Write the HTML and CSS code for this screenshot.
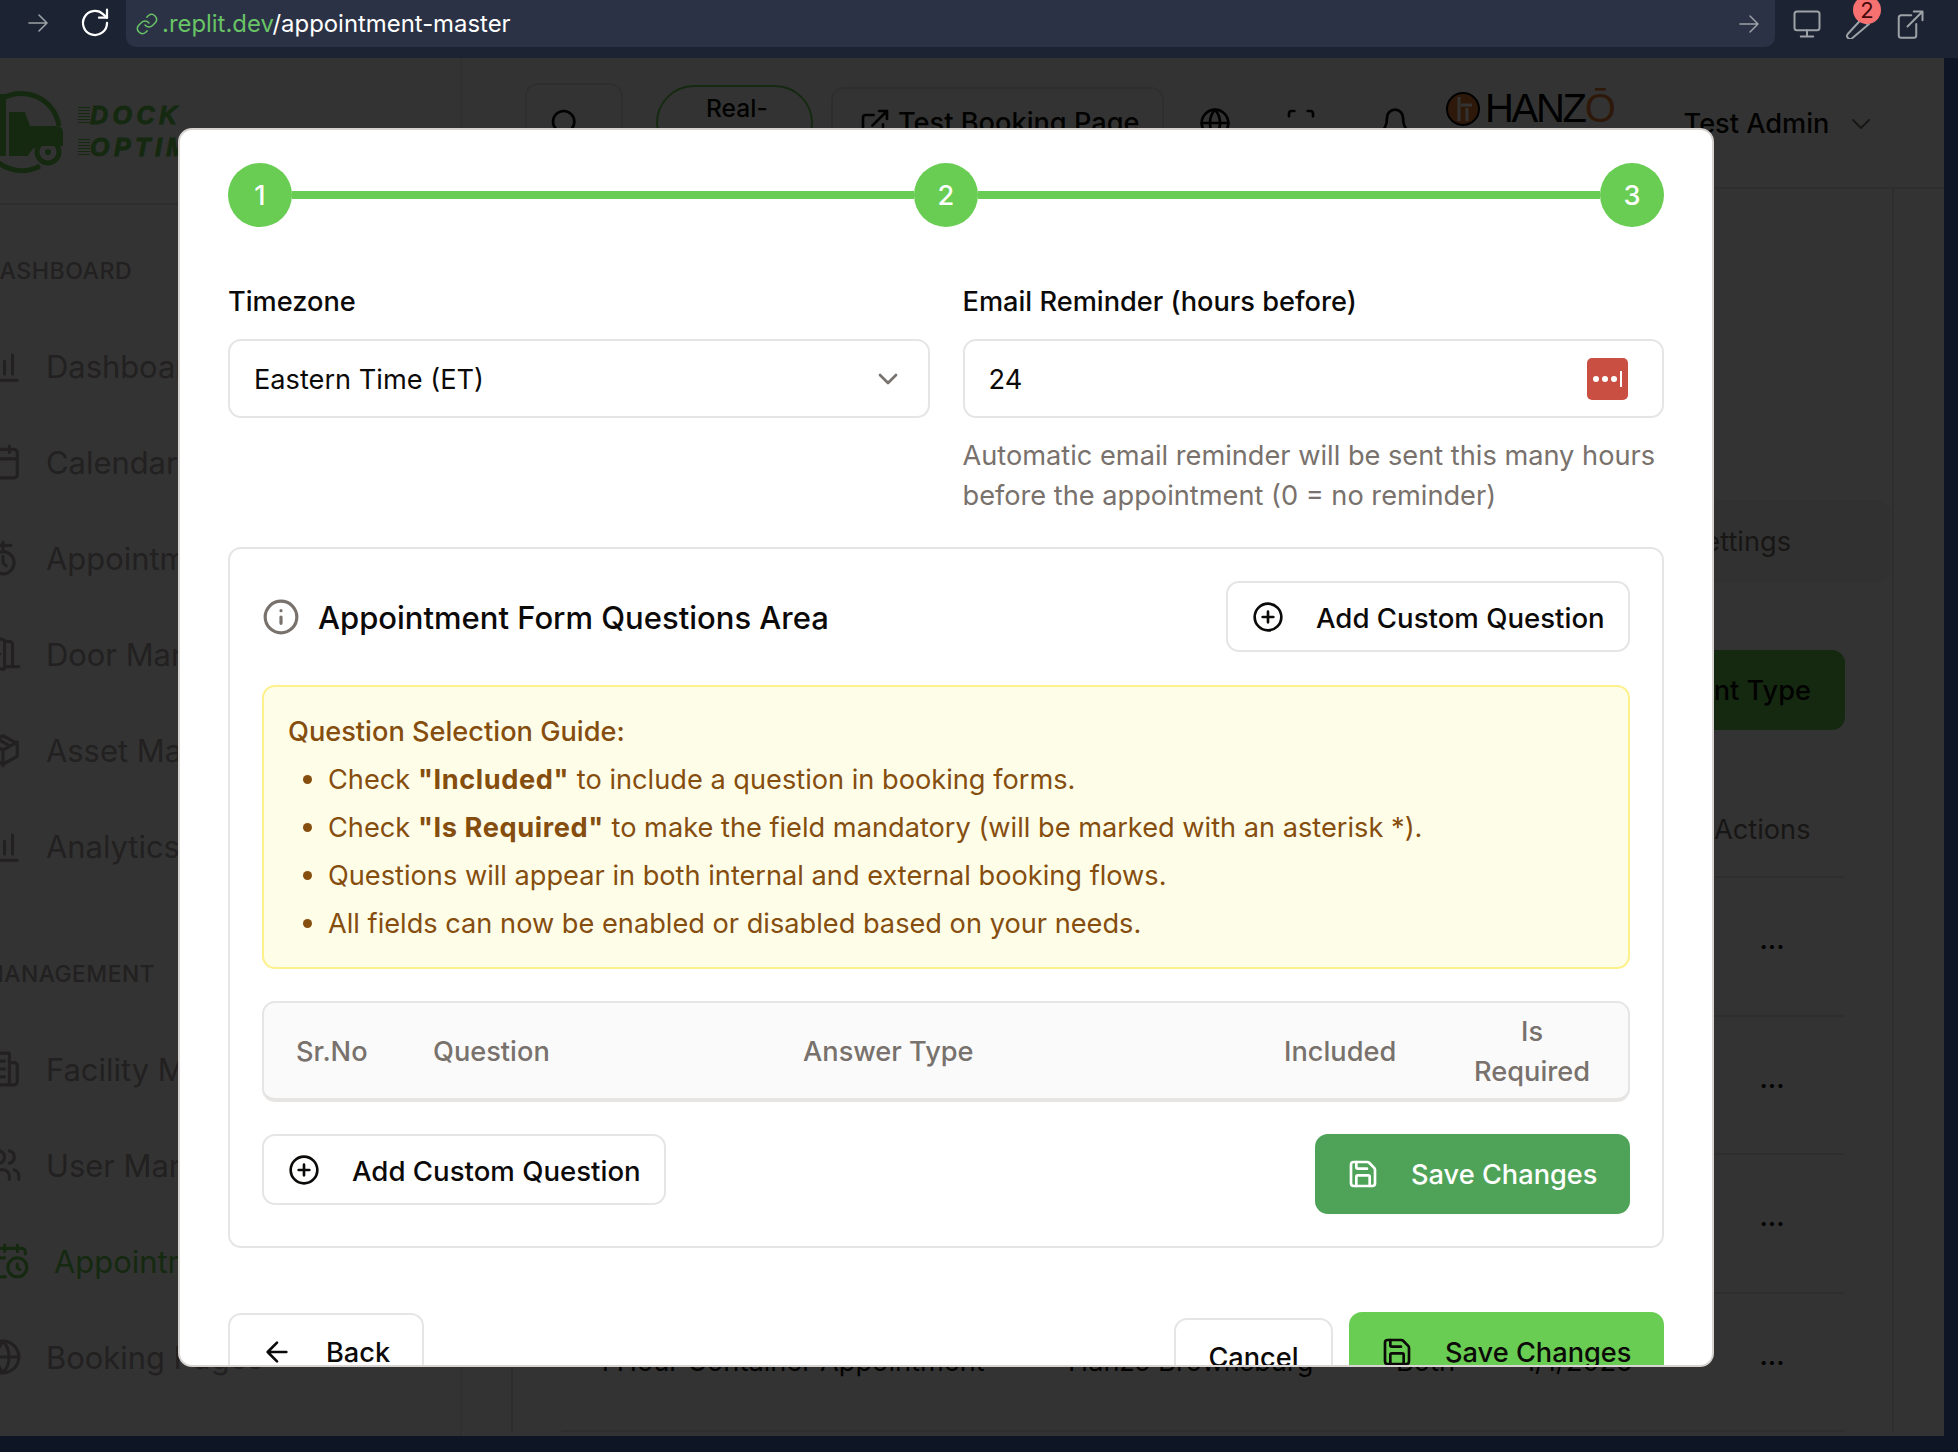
FILE: index.html
```html
<!DOCTYPE html>
<html>
<head>
	<title>Appointment Master</title>
	<link rel="stylesheet" href="styles.css">
</head>
<body>
	<div class="browser-bar">
		<svg class="bar-icon nav-arrow" viewBox="0 0 24 24"><path d="M3 12h18M13 4l8 8-8 8"/></svg>
		<svg class="reload-icon" viewBox="0 0 24 24"><path d="M21 12a9 9 0 1 1-3-6.7L21 8"/><path d="M21 2v6h-6"/></svg>
		<div class="url-bar">
			<svg class="link-icon" viewBox="0 0 24 24"><path d="M10 13a5 5 0 0 0 7.5.5l3-3a5 5 0 0 0-7-7l-1.7 1.7"/><path d="M14 11a5 5 0 0 0-7.5-.5l-3 3a5 5 0 0 0 7 7l1.7-1.7"/></svg>
			<span class="url-text"><span class="url-host">.replit.dev</span>/appointment-master</span>
			<svg class="url-go" viewBox="0 0 24 24"><path d="M3 12h18M13 4l8 8-8 8"/></svg>
		</div>
		<svg class="bar-icon monitor" viewBox="0 0 24 24"><rect x="2" y="2" width="20" height="15" rx="2"/><path d="M12 17v5M7 22h10"/></svg>
		<div class="tool-wrap">
			<svg class="bar-icon" viewBox="0 0 24 24"><path d="M15 7a5 5 0 0 0 5 5L7 23a2.2 2.2 0 0 1-4-3L15 7z"/></svg>
			<span class="tool-badge">2</span>
		</div>
		<svg class="bar-icon external" viewBox="0 0 24 24"><path d="M13 5H5a2 2 0 0 0-2 2v14a2 2 0 0 0 2 2h10a2 2 0 0 0 2-2v-9"/><path d="M10 14L22 2M15 2h7v7"/></svg>
	</div>

	<div class="app">
		<aside class="sidebar">
			<div class="logo">
				<svg class="logo-mark" viewBox="0 0 66 84">
					<path class="logo-ring" d="M0 10a38 38 0 0 1 59 26M40 76a38 38 0 0 1-52-16"/>
					<path class="logo-truck" d="M-4 4h10v62H-4zM9 22h16l5 14h27a6 6 0 0 1 6 6v14H42a16 16 0 0 0-14 10H9z"/>
					<circle class="logo-wheel" cx="48" cy="62" r="11"/>
					<circle class="logo-hub" cx="48" cy="62" r="2"/>
				</svg>
				<div class="logo-text"><span class="logo-line">DOCK</span><span class="logo-line">OPTIMA</span></div>
			</div>
			<div class="side-label">DASHBOARD</div>
			<a class="side-item"><svg viewBox="0 0 24 24"><path d="M3 3v16a2 2 0 0 0 2 2h16M13 17V9M18 17V5M8 17v-3"/></svg>Dashboard</a>
			<a class="side-item"><svg viewBox="0 0 24 24"><rect x="3" y="4" width="18" height="18" rx="2"/><path d="M16 2v4M8 2v4M3 10h18"/></svg>Calendar</a>
			<a class="side-item"><svg viewBox="0 0 24 24"><circle cx="12" cy="15" r="7"/><path d="M12 11v4l2 2M12 2v4M7 4h10"/></svg>Appointments</a>
			<a class="side-item"><svg viewBox="0 0 24 24"><path d="M13 4h3a2 2 0 0 1 2 2v14M2 20h3M13 20h9M10 12v.01M13 4.6v16.1a1 1 0 0 1-1.2 1L5 20V5.6a2 2 0 0 1 1.5-2l4-1A2 2 0 0 1 13 4.6z"/></svg>Door Manager</a>
			<a class="side-item"><svg viewBox="0 0 24 24"><path d="M12 22V12M3 7l9 5 9-5M21 16V8l-9-5-9 5v8l9 5 9-5M7.5 4.5l9 5"/></svg>Asset Manager</a>
			<a class="side-item"><svg viewBox="0 0 24 24"><path d="M3 3v16a2 2 0 0 0 2 2h16M13 17V9M18 17V5M8 17v-3"/></svg>Analytics</a>
			<div class="side-label side-label-two">MANAGEMENT</div>
			<a class="side-item"><svg viewBox="0 0 24 24"><path d="M2 2h14v20H2zM16 8h3a2 2 0 0 1 2 2v10a2 2 0 0 1-2 2H2M5 7h8M5 12h8M5 17h8"/></svg>Facility Master</a>
			<a class="side-item"><svg viewBox="0 0 24 24"><path d="M16 21v-2a4 4 0 0 0-4-4H6a4 4 0 0 0-4 4v2M16 3.1a4 4 0 0 1 0 7.8M22 21v-2a4 4 0 0 0-3-3.9"/><circle cx="9" cy="7" r="4"/></svg>User Manager</a>
			<a class="side-item side-active"><svg viewBox="0 0 24 24"><path d="M21 7.5V6a2 2 0 0 0-2-2H5a2 2 0 0 0-2 2v14a2 2 0 0 0 2 2h3.5M16 2v4M8 2v4M3 10h5M17.5 17.5L16 16.3V14"/><circle cx="16" cy="16" r="6"/></svg>Appointment Master</a>
			<a class="side-item"><svg viewBox="0 0 24 24"><circle cx="12" cy="12" r="10"/><path d="M2 12h20M12 2a15 15 0 0 1 0 20M12 2a15 15 0 0 0 0 20"/></svg>Booking Pages</a>
		</aside>

		<main class="main">
			<header class="topbar">
				<div class="top-btn search-btn"><svg class="top-icon" viewBox="0 0 24 24"><circle cx="11" cy="11" r="8"/><path d="M21 21l-4.3-4.3"/></svg></div>
				<div class="realtime"><svg class="realtime-icon" viewBox="0 0 24 24"><circle cx="12" cy="12" r="10"/><path d="M8 12l3 3 5-5"/></svg><span>Real-<br>time</span></div>
				<div class="top-btn booking-btn"><svg class="top-icon" viewBox="0 0 24 24"><path d="M15 3h6v6M10 14L21 3M18 13v6a2 2 0 0 1-2 2H5a2 2 0 0 1-2-2V8a2 2 0 0 1 2-2h6"/></svg>Test Booking Page</div>
				<svg class="top-icon globe" viewBox="0 0 24 24"><circle cx="12" cy="12" r="10"/><path d="M2 12h20M12 2a15 15 0 0 1 0 20M12 2a15 15 0 0 0 0 20"/></svg>
				<svg class="top-icon focus" viewBox="0 0 24 24"><path d="M3 7V5a2 2 0 0 1 2-2h2M17 3h2a2 2 0 0 1 2 2v2M21 17v2a2 2 0 0 1-2 2h-2M7 21H5a2 2 0 0 1-2-2v-2"/></svg>
				<svg class="top-icon bell" viewBox="0 0 24 24"><path d="M6 8a6 6 0 0 1 12 0c0 7 3 9 3 9H3s3-2 3-9"/></svg>
				<div class="brand">
					<svg class="brand-mark" viewBox="0 0 34 34"><circle cx="17" cy="17" r="16" fill="#e07a30" stroke="#000" stroke-width="2"/><path d="M13 5v24M15 13h11M21 16v13" stroke="#fff" stroke-width="3" fill="none" stroke-linecap="butt"/></svg>
					<span class="brand-name">HANZ<span class="brand-o">Ō</span></span>
				</div>
				<div class="user">Test Admin<svg class="user-chevron" viewBox="0 0 24 24"><path d="M4 8l8 8 8-8"/></svg></div>
			</header>

			<section class="page-card">
				<div class="tabs"><span>Appointment Types</span><span class="tab-last">Settings</span></div>
				<div class="toolbar"><div class="new-type">New Appointment Type</div></div>
				<div class="row head-row"><span>Name</span><span>Facility</span><span>Type</span><span>Created</span><span>Actions</span></div>
				<div class="row"><span>4 Hour Trailer Appointment</span><span>Hanzo Brownsburg</span><span>Both</span><span>1/1/2025</span><span class="dots">•••</span></div>
				<div class="row"><span>2 Hour Trailer Appointment</span><span>Hanzo Brownsburg</span><span>Both</span><span>1/1/2025</span><span class="dots">•••</span></div>
				<div class="row"><span>4 Hour Container Appointment</span><span>Hanzo Brownsburg</span><span>Both</span><span>1/1/2025</span><span class="dots">•••</span></div>
				<div class="row"><span>1 Hour Container Appointment</span><span>Hanzo Brownsburg</span><span>Both</span><span>1/1/2025</span><span class="dots">•••</span></div>
			</section>
		</main>
		<div class="backdrop"></div>
	</div>

	<div class="modal">
		<div class="stepper">
			<span class="step">1</span><span class="step-line"></span>
			<span class="step">2</span><span class="step-line"></span>
			<span class="step">3</span>
		</div>

		<div class="field-grid">
			<div>
				<label class="field-label">Timezone</label>
				<div class="input-box">Eastern Time (ET)
					<svg class="select-chevron" viewBox="0 0 24 24"><path d="M6 9l6 6 6-6"/></svg>
				</div>
			</div>
			<div>
				<label class="field-label">Email Reminder (hours before)</label>
				<div class="input-box">24
					<span class="pw-badge"><i></i><i></i><i></i><b></b></span>
				</div>
				<p class="help">Automatic email reminder will be sent this many hours before the appointment (0 = no reminder)</p>
			</div>
		</div>

		<div class="card">
			<div class="card-head">
				<svg class="info-icon" viewBox="0 0 24 24"><circle cx="12" cy="12" r="10"/><path d="M12 16v-4M12 8h.01"/></svg>
				<h2 class="card-title">Appointment Form Questions Area</h2>
				<button class="btn btn-outline btn-add">
					<svg class="btn-icon" viewBox="0 0 24 24"><circle cx="12" cy="12" r="10"/><path d="M8 12h8M12 8v8"/></svg>
					<span class="add-label">Add Custom Question</span>
				</button>
			</div>

			<div class="guide">
				<div class="guide-title">Question Selection Guide:</div>
				<ul class="guide-list">
					<li>Check <strong>"Included"</strong> to include a question in booking forms.</li>
					<li>Check <strong>"Is Required"</strong> to make the field mandatory (will be marked with an asterisk *).</li>
					<li>Questions will appear in both internal and external booking flows.</li>
					<li>All fields can now be enabled or disabled based on your needs.</li>
				</ul>
			</div>

			<div class="q-table">
				<span class="q-cell">Sr.No</span>
				<span class="q-cell">Question</span>
				<span class="q-cell">Answer Type</span>
				<span class="q-cell">Included</span>
				<span class="q-cell q-center">Is Required</span>
			</div>

			<div class="card-actions">
				<button class="btn btn-outline btn-add">
					<svg class="btn-icon" viewBox="0 0 24 24"><circle cx="12" cy="12" r="10"/><path d="M8 12h8M12 8v8"/></svg>
					<span class="add-label">Add Custom Question</span>
				</button>
				<button class="btn btn-save btn-dim">
					<svg class="btn-icon" viewBox="0 0 24 24"><path d="M15.2 3a2 2 0 0 1 1.4.6l3.8 3.8a2 2 0 0 1 .6 1.4V19a2 2 0 0 1-2 2H5a2 2 0 0 1-2-2V5a2 2 0 0 1 2-2z"/><path d="M17 21v-7a1 1 0 0 0-1-1H8a1 1 0 0 0-1 1v7"/><path d="M7 3v4a1 1 0 0 0 1 1h7"/></svg>
					Save Changes
				</button>
			</div>
		</div>

		<div class="modal-foot">
			<button class="btn btn-outline btn-back">
				<svg class="btn-icon" viewBox="0 0 24 24"><path d="M12 19l-7-7 7-7M19 12H5"/></svg>
				Back
			</button>
			<div class="foot-right">
				<button class="btn btn-outline btn-cancel">Cancel</button>
				<button class="btn btn-save btn-bright">
					<svg class="btn-icon" viewBox="0 0 24 24"><path d="M15.2 3a2 2 0 0 1 1.4.6l3.8 3.8a2 2 0 0 1 .6 1.4V19a2 2 0 0 1-2 2H5a2 2 0 0 1-2-2V5a2 2 0 0 1 2-2z"/><path d="M17 21v-7a1 1 0 0 0-1-1H8a1 1 0 0 0-1 1v7"/><path d="M7 3v4a1 1 0 0 0 1 1h7"/></svg>
					Save Changes
				</button>
			</div>
		</div>
	</div>
</body>
</html>
```

FILE: styles.css
```css
* {
	box-sizing: border-box;
}

html, body {
	height: 100%;
}

body {
	margin: 0;
	position: relative;
	height: 1452px;
	overflow: hidden;
	background-color: #0e1525;
	font-family: Inter, "Noto Sans", sans-serif;
	font-size: 27.2px;
	color: #0c0a09;
}

svg {
	fill: none;
	stroke: currentColor;
	stroke-width: 2;
	stroke-linecap: round;
	stroke-linejoin: round;
	flex-shrink: 0;
}

/* browser chrome */
.browser-bar {
	display: flex;
	align-items: flex-start;
	height: 58px;
	background-color: #1c2333;
	color: #9da2a6;
}

.bar-icon {
	width: 30px;
	height: 30px;
	margin-top: 9px;
	stroke-width: 1.6;
}

.nav-arrow {
	width: 24px;
	margin-left: 26px;
	margin-top: 8px;
}

.reload-icon {
	width: 32px;
	height: 32px;
	margin: 7px 0 0 29px;
	color: #fff;
	stroke-width: 1.7;
}

.url-bar {
	display: flex;
	align-items: center;
	width: 1649px;
	height: 47px;
	margin-left: 15px;
	padding: 0 14px 0 9px;
	background-color: #2b3245;
	border-radius: 0 0 10px 10px;
	color: #fff;
}

.link-icon {
	width: 24px;
	height: 24px;
	color: #69c466;
	stroke-width: 1.5;
}

.url-text {
	flex: 1;
	margin-left: 3px;
	font-size: 23.9px;
}

.url-host {
	color: #69c466;
}

.url-go {
	width: 24px;
	height: 24px;
	color: #9da2a6;
	stroke-width: 1.5;
}

.monitor {
	margin-left: 17px;
}

.tool-wrap {
	position: relative;
	width: 30px;
	margin-left: 22px;
}

.tool-badge {
	position: absolute;
	left: 9px;
	top: -4px;
	width: 28px;
	height: 28px;
	border-radius: 50%;
	background-color: #f87171;
	color: #450a0a;
	font-size: 22px;
	line-height: 28px;
	text-align: center;
}

.external {
	margin-left: 21px;
}

/* dimmed app behind the dialog */
.app {
	position: relative;
	display: flex;
	width: 1944px;
	height: 1378px;
	overflow: hidden;
	background-color: #fff;
}

.backdrop {
	position: absolute;
	inset: 0;
	background-color: rgba(0, 0, 0, 0.8);
}

.sidebar {
	flex: none;
	width: 479px;
	margin-left: -17px;
	border-right: 2px solid #eeeeee;
	color: #a8a29e;
}

.logo {
	display: flex;
	height: 147px;
	padding: 32px 0 0 17px;
	border-bottom: 2px solid #e7e5e4;
}

.logo-mark {
	width: 66px;
	height: 84px;
	overflow: visible;
	color: #68cd52;
}

.logo-ring {
	stroke-width: 5;
	stroke-linecap: butt;
}

.logo-truck {
	fill: #68cd52;
	stroke: none;
}

.logo-wheel {
	stroke-width: 5;
}

.logo-hub {
	fill: #68cd52;
}

.logo-text {
	display: flex;
	flex-direction: column;
	gap: 7px;
	margin: 13px 0 0 12px;
	font-family: "Liberation Sans", sans-serif;
	font-style: italic;
	font-weight: bold;
	font-size: 25px;
	line-height: 25px;
	letter-spacing: 4.5px;
	color: #68cd52;
	-webkit-text-stroke: 1px #68cd52;
}

.logo-line {
	display: flex;
	align-items: center;
}

.logo-line::before {
	content: "";
	width: 12px;
	height: 18px;
	background: repeating-linear-gradient(#68cd52 0 1px, transparent 1px 3px);
}

.side-label {
	margin-top: 48px;
	line-height: 36px;
	font-size: 23.2px;
	font-weight: 500;
	letter-spacing: 0.5px;
}

.side-label-two {
	margin-top: 62px;
	font-size: 22.8px;
}

.side-item {
	display: flex;
	align-items: center;
	gap: 24px;
	height: 96px;
	font-size: 30.9px;
	white-space: nowrap;
}

.side-item svg {
	width: 38px;
	height: 38px;
	margin-left: 1px;
}

.side-label + .side-item {
	margin-top: 29px;
}

.side-active {
	padding-left: 8px;
	color: #68cd52;
}

.main {
	flex: 1;
	min-width: 0;
}

.topbar {
	display: flex;
	align-items: center;
	height: 131px;
	padding-left: 63px;
	border-bottom: 2px solid #e7e5e4;
}

.top-btn {
	display: flex;
	align-items: center;
	border: 2px solid #e7e5e4;
	border-radius: 13px;
	font-weight: 500;
}

.top-icon {
	width: 32px;
	height: 32px;
}

.search-btn {
	width: 98px;
	height: 80px;
	padding-left: 22px;
}

.realtime {
	display: flex;
	align-items: center;
	gap: 8px;
	width: 157px;
	height: 76px;
	margin-left: 33px;
	padding-left: 22px;
	padding-top: 6px;
	border: 2px solid #68cd52;
	border-radius: 38px;
	font-size: 24.6px;
	font-weight: 500;
	line-height: 36px;
}

.realtime-icon {
	width: 18px;
	height: 18px;
	margin-top: 24px;
}

.booking-btn {
	gap: 7px;
	width: 333px;
	height: 72px;
	margin-left: 18px;
	padding-left: 26px;
	white-space: nowrap;
}

.globe {
	margin-left: 35px;
}

.focus {
	margin-left: 54px;
}

.bell {
	margin-left: 62px;
}

.brand {
	display: flex;
	align-items: center;
	gap: 5px;
	margin: -28px 0 0 35px;
}

.brand-mark {
	width: 34px;
	height: 34px;
}

.brand-name {
	font-family: "Liberation Sans", sans-serif;
	font-size: 40px;
	letter-spacing: -2.3px;
	color: #000;
}

.brand-o {
	color: #e07a30;
}

.user {
	display: flex;
	align-items: center;
	gap: 20px;
	margin: 2px 0 0 70px;
	font-weight: 500;
	white-space: nowrap;
}

.user-chevron {
	width: 24px;
	height: 24px;
	color: #78716c;
}

.page-card {
	margin: 0 50px 0 49px;
	padding-top: 311px;
	border-left: 2px solid #e7e5e4;
	border-right: 2px solid #e7e5e4;
}

.tabs {
	display: flex;
	justify-content: flex-end;
	align-items: center;
	gap: 60px;
	height: 82px;
	padding-right: 100px;
	margin-right: 1px;
	background-color: #f5f5f4;
	border-radius: 13px;
	color: #78716c;
	white-space: nowrap;
}

.toolbar {
	display: flex;
	justify-content: flex-end;
	height: 201px;
	padding: 68px 47px 0 0;
}

.new-type {
	display: flex;
	align-items: center;
	height: 80px;
	padding: 0 34px;
	background-color: #68cd52;
	border-radius: 13px;
	font-weight: 500;
	white-space: nowrap;
}

.row {
	display: grid;
	grid-template-columns: 470px 328px 128px 190px 130px;
	align-items: center;
	height: 138.5px;
	margin: 0 48px;
	padding-left: 37px;
	border-bottom: 2px solid #e7e5e4;
	white-space: nowrap;
}

.head-row {
	height: 95px;
	color: #78716c;
}

.dots {
	padding-left: 46px;
	font-size: 13px;
	letter-spacing: 1px;
}

/* dialog */
.modal {
	position: absolute;
	left: 178px;
	top: 128px;
	width: 1536px;
	height: 1239px;
	padding: 33px 48px 0;
	overflow: hidden;
	background-color: #fff;
	border: 2px solid #d6d3d1;
	border-radius: 14px;
}

.stepper {
	display: flex;
	align-items: center;
}

.step {
	display: flex;
	align-items: center;
	justify-content: center;
	width: 64px;
	height: 64px;
	border-radius: 50%;
	background-color: #68cd52;
	color: #fff;
	font-weight: 500;
}

.step-line {
	flex: 1;
	height: 8px;
	background-color: #68cd52;
}

.field-grid {
	display: grid;
	grid-template-columns: 1fr 1fr;
	gap: 33px;
	margin-top: 54px;
}

.field-label {
	display: block;
	padding-top: 1px;
	margin-bottom: 17px;
	font-weight: 500;
	line-height: 40px;
}

.input-box {
	display: flex;
	align-items: center;
	justify-content: space-between;
	height: 79px;
	padding: 2px 26px 0 24px;
	border: 2px solid #e7e5e4;
	border-radius: 13px;
}

.select-chevron {
	width: 32px;
	height: 32px;
	margin: -2px -2px 0 0;
	color: #78716c;
}

.pw-badge {
	display: flex;
	align-items: center;
	justify-content: center;
	gap: 3px;
	width: 41px;
	height: 42px;
	margin: -2px 8px 0 0;
	background-color: #c94f43;
	border-radius: 5px;
}

.pw-badge i {
	width: 6px;
	height: 6px;
	border-radius: 50%;
	background-color: #fff;
}

.pw-badge b {
	width: 2px;
	height: 16px;
	background-color: #fff;
}

.help {
	margin: 18px 0 0;
	line-height: 40px;
	color: #78716c;
}

.card {
	margin-top: 31px;
	padding: 32px;
	border: 2px solid #e7e5e4;
	border-radius: 13px;
}

.card-head {
	display: flex;
	align-items: center;
}

.info-icon {
	width: 38px;
	height: 38px;
	color: #78716c;
}

.card-title {
	flex: 1;
	margin: 2px 0 0 18px;
	font-size: 31px;
	font-weight: 500;
}

.btn {
	display: inline-flex;
	align-items: center;
	font-family: inherit;
	font-size: 27.2px;
	font-weight: 500;
	white-space: nowrap;
	border-radius: 13px;
	color: #0c0a09;
	background-color: #fff;
}

.btn-outline {
	border: 2px solid #e7e5e4;
}

.btn-icon {
	width: 32px;
	height: 32px;
}

.btn-add {
	gap: 32px;
	width: 404px;
	height: 71px;
	padding: 0 0 0 24px;
}

.add-label {
	margin-top: 2px;
	font-size: 27.6px;
}

.guide {
	margin-top: 33px;
	padding: 25px 24px 20px;
	background-color: #fefde8;
	border: 2px solid #fef08a;
	border-radius: 13px;
	color: #854d0e;
}

.guide-title {
	line-height: 40px;
	font-weight: 500;
}

.guide-list {
	margin: 3px 0 0;
	padding-left: 40px;
	line-height: 48px;
}

.guide-list li {
	height: 48px;
}

.guide-list li::marker {
	font-size: 28px;
}

.guide-list strong {
	letter-spacing: 0.6px;
}

.q-table {
	display: grid;
	grid-template-columns: 137px 370px 481px 184px 192px;
	align-items: center;
	height: 101px;
	margin-top: 32px;
	padding-top: 2px;
	background-color: #fafafa;
	border: 2px solid #e7e5e4;
	border-bottom-width: 4px;
	border-radius: 13px;
	color: #78716c;
	font-weight: 500;
	line-height: 40px;
}

.q-cell {
	padding-left: 32px;
}

.q-center {
	padding: 0 32px;
	text-align: center;
}

.card-actions {
	display: flex;
	justify-content: space-between;
	align-items: flex-start;
	margin-top: 32px;
}

.btn-save {
	gap: 32px;
	width: 315px;
	height: 80px;
	padding: 0 0 0 32px;
	border: none;
}

.btn-dim {
	background-color: #4fa358;
	color: #fff;
}

.btn-bright {
	background-color: #68cd52;
}

.modal-foot {
	display: flex;
	justify-content: space-between;
	align-items: flex-start;
	margin-top: 64px;
}

.btn-back {
	gap: 33px;
	width: 196px;
	height: 78px;
	margin-top: 1px;
	padding-left: 31px;
}

.foot-right {
	display: flex;
	align-items: flex-start;
	gap: 16px;
}

.btn-cancel {
	justify-content: center;
	width: 159px;
	height: 78px;
	margin-top: 6px;
}
```
